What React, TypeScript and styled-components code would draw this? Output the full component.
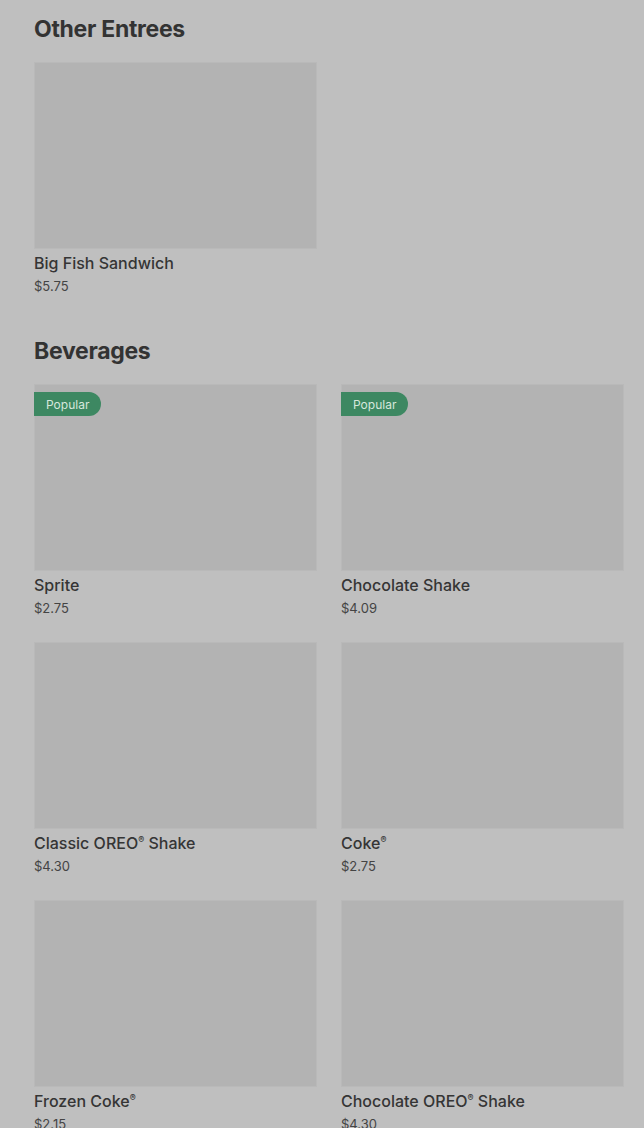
import React from "react";
import styled, { createGlobalStyle } from "styled-components";

const GlobalStyle = createGlobalStyle`
  html, body {
    margin: 0;
    padding: 0;
    background-color: #bfbfbf;
  }
  body {
    font-family: Inter, "Noto Sans", "Liberation Sans", sans-serif;
    color: #333333;
  }
`;

const Page = styled.div`
  padding: 13px 20px 0 34px;
  display: flex;
  flex-direction: column;
  gap: 39px;
`;

const Section = styled.section`
  display: flex;
  flex-direction: column;
`;

const Heading = styled.h2`
  margin: 0 0 17px;
  font-size: 23px;
  line-height: 32px;
  font-weight: 700;
  letter-spacing: -0.3px;
  color: #333333;
`;

const Grid = styled.div`
  display: grid;
  grid-template-columns: 283px 283px;
  column-gap: 24px;
  row-gap: 24px;
`;

const Card = styled.div`
  display: flex;
  flex-direction: column;
`;

const Thumb = styled.div`
  position: relative;
  height: 187px;
  background-color: #b3b3b3;
  box-shadow: inset 0 0 0 1px #b9b9b9;
`;

const Badge = styled.span`
  position: absolute;
  top: 8px;
  left: 0;
  height: 24px;
  padding: 0 12px;
  display: flex;
  align-items: center;
  background-color: #3d8862;
  color: #d6e7dc;
  font-size: 12px;
  border-radius: 0 12px 12px 0;
`;

const Name = styled.div`
  margin-top: 3px;
  font-size: 16px;
  line-height: 22px;
  font-weight: 500;
  color: #353535;
`;

const Reg = styled.span`
  font-size: 9px;
  vertical-align: 6px;
  line-height: 0;
`;

const Price = styled.div`
  margin-top: 2px;
  font-size: 13px;
  line-height: 20px;
  color: #444444;
`;

type Item = { name: string; price: string; popular?: boolean };

const entrees: Item[] = [{ name: "Big Fish Sandwich", price: "$5.75" }];

const beverages: Item[] = [
  { name: "Sprite", price: "$2.75", popular: true },
  { name: "Chocolate Shake", price: "$4.09", popular: true },
  { name: "Classic OREO® Shake", price: "$4.30" },
  { name: "Coke®", price: "$2.75" },
  { name: "Frozen Coke®", price: "$2.15" },
  { name: "Chocolate OREO® Shake", price: "$4.30" },
];

// small raised ® like the reference
const renderName = (name: string) =>
  name.split("®").map((part, i, arr) => (
    <React.Fragment key={i}>
      {part}
      {i < arr.length - 1 && <Reg>®</Reg>}
    </React.Fragment>
  ));

const MenuSection = ({ title, items }: { title: string; items: Item[] }) => (
  <Section>
    <Heading>{title}</Heading>
    <Grid>
      {items.map((item) => (
        <Card key={item.name}>
          <Thumb>{item.popular && <Badge>Popular</Badge>}</Thumb>
          <Name>{renderName(item.name)}</Name>
          <Price>{item.price}</Price>
        </Card>
      ))}
    </Grid>
  </Section>
);

const App = () => (
  <>
    <GlobalStyle />
    <Page>
      <MenuSection title="Other Entrees" items={entrees} />
      <MenuSection title="Beverages" items={beverages} />
    </Page>
  </>
);

export default App;
